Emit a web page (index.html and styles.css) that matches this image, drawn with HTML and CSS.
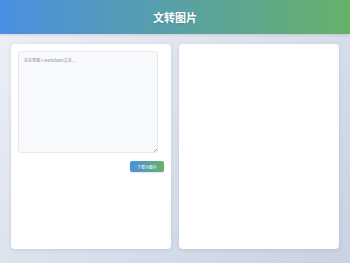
FILE: index.html
```html
<!DOCTYPE html>
<html lang="zh">
<head>
  <meta charset="UTF-8">
  <meta name="viewport" content="width=device-width, initial-scale=1.0">
  <title>文转图片</title>
  <link rel="stylesheet" href="styles.css">
</head>
<body>
  <header class="top-bar">
    <h1>文转图片</h1>
  </header>

  <main class="workspace">
    <section class="card editor-card">
      <div class="input-wrap">
        <textarea id="mdInput" placeholder="在这里输入Markdown文本..."></textarea>
      </div>
      <div class="actions">
        <button id="downloadBtn" class="gradient-button">下载为图片</button>
      </div>
    </section>
    <section class="card preview-card" id="preview"></section>
  </main>
</body>
</html>
```

FILE: styles.css
```css
html, body {
  height: 100%;
}
body {
  margin: 0;
  font-family: "Noto Sans CJK SC", "Noto Sans", sans-serif;
  background: linear-gradient(135deg, #eef1f6 0%, #c8d2e3 100%);
  display: flex;
  flex-direction: column;
}
.top-bar {
  height: 34px;
  background: linear-gradient(90deg, #4a8fe2, #67b16a);
  display: flex;
  align-items: center;
  justify-content: center;
  box-shadow: 0 1px 3px rgba(0, 0, 0, 0.12);
}
.top-bar h1 {
  margin: 0;
  color: #fff;
  font-size: 11px;
  font-weight: 700;
  text-shadow: 0 1px 2px rgba(0, 0, 0, 0.15);
}
.workspace {
  flex: 1;
  display: grid;
  grid-template-columns: 1fr 1fr;
  gap: 8px;
  padding: 10px 11px 14px;
}
.card {
  background: #fff;
  border-radius: 4px;
  box-shadow: 0 1px 4px rgba(60, 80, 120, 0.15);
}
.editor-card {
  padding: 7px;
  display: flex;
  flex-direction: column;
}
.input-wrap {
  position: relative;
  width: 140px;
}
/* mały uchwyt w rogu zamiast domyślnego */
.input-wrap::after {
  content: "";
  position: absolute;
  right: 1px;
  bottom: 1px;
  width: 3px;
  height: 3px;
  background: linear-gradient(135deg, transparent 45%, #9aa0a8 45%, #9aa0a8 60%, transparent 60%);
}
#mdInput {
  display: block;
  width: 100%;
  height: 102px;
  box-sizing: border-box;
  resize: none;
  background: #f8f9fb;
  border: 1px solid #e6eaf0;
  border-radius: 3px;
  padding: 5px;
  font-family: inherit;
  font-size: 4px;
  color: #333;
}
#mdInput::placeholder {
  color: #8a9099;
}
.actions {
  display: flex;
  justify-content: flex-end;
  margin-top: 8px;
}
.gradient-button {
  width: 34px;
  height: 11px;
  padding: 0;
  border: none;
  border-radius: 2px;
  background: linear-gradient(90deg, #4a8fe2, #67b16a);
  color: #fff;
  font-family: inherit;
  font-size: 4px;
  cursor: pointer;
  box-shadow: 0 1px 2px rgba(0, 0, 0, 0.12);
}
```
